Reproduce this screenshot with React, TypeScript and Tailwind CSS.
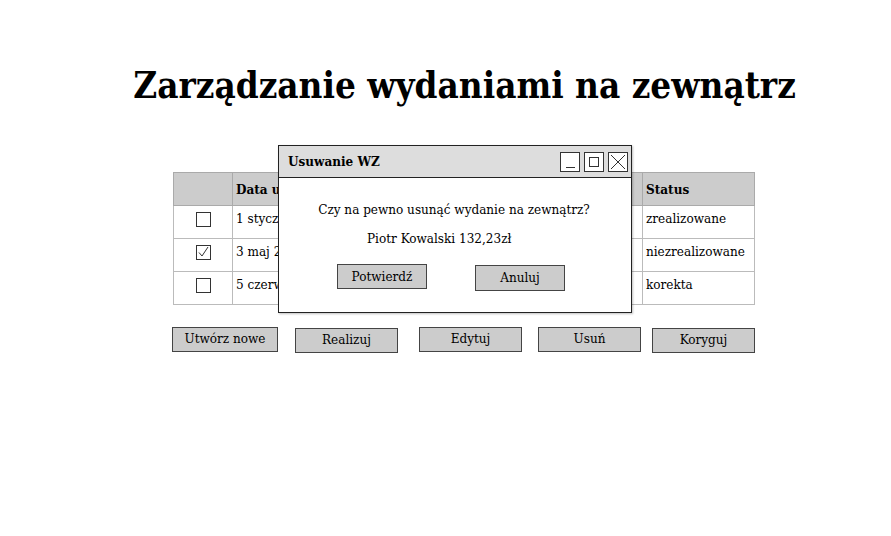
const rows = [
  { checked: false, date: "1 stycznia 2020", status: "zrealizowane" },
  { checked: true, date: "3 maj 2020", status: "niezrealizowane" },
  { checked: false, date: "5 czerwca 2020", status: "korekta" },
];

const actions = [
  { label: "Utwórz nowe", cls: "w-[106px] ml-0 mt-0" },
  { label: "Realizuj", cls: "w-[103px] ml-[17px] mt-px" },
  { label: "Edytuj", cls: "w-[103px] ml-[21px] mt-0" },
  { label: "Usuń", cls: "w-[103px] ml-[16px] mt-0" },
  { label: "Koryguj", cls: "w-[103px] ml-[11px] mt-px" },
];

function Checkbox({ checked }: { checked: boolean }) {
  return (
    <svg width="15" height="15" viewBox="0 0 15 15" className="mx-auto block">
      <rect x="0.5" y="0.5" width="14" height="14" fill="#fff" stroke="#333" />
      {checked && <path d="M3 7.5 L6 11 L12 2" fill="none" stroke="#333" strokeWidth="1" />}
    </svg>
  );
}

export default function App() {
  return (
    <div className="w-[891px] h-[536px] bg-white relative overflow-hidden font-['DejaVu_Serif_Condensed','DejaVu_Serif',serif] text-black">
      <h1 className="pt-[66px] text-center text-[36.5px] font-bold leading-[40px] pl-[38px]">
        Zarządzanie wydaniami na zewnątrz
      </h1>

      <div className="ml-[173px] mt-[66px] w-[582px] text-[13.4px]">
        <table className="w-full border-collapse">
          <thead>
            <tr className="h-[33px] bg-[#cccccc]">
              <th className="w-[59px] border border-[#aaaaaa]" />
              <th className="w-[150px] border border-[#aaaaaa] text-left pl-[3px] font-bold whitespace-nowrap">Data utworzenia</th>
              <th className="w-[140px] border border-[#aaaaaa]" />
              <th className="w-[120px] border border-[#aaaaaa]" />
              <th className="border border-[#aaaaaa] text-left pl-[3px] font-bold">Status</th>
            </tr>
          </thead>
          <tbody>
            {rows.map((r) => (
              <tr key={r.date} className="h-[33px]">
                <td className="border border-[#bbbbbb] pb-[5px]">
                  <Checkbox checked={r.checked} />
                </td>
                <td className="border border-[#bbbbbb] pl-[3px] pb-[5px] whitespace-nowrap">{r.date}</td>
                <td className="border border-[#bbbbbb]" />
                <td className="border border-[#bbbbbb]" />
                <td className="border border-[#bbbbbb] pl-[3px] pb-[5px]">{r.status}</td>
              </tr>
            ))}
          </tbody>
        </table>

        <div className="flex items-start mt-[22px] -ml-px">
          {actions.map((a) => (
            <div
              key={a.label}
              className={`${a.cls} h-[25px] bg-[#cccccc] border border-[#444] flex items-center justify-center`}
            >
              {a.label}
            </div>
          ))}
        </div>
      </div>

      {/* modal dialog */}
      <div className="absolute left-[278px] top-[145px] w-[354px] h-[168px] bg-white border border-[#222] shadow-[1px_1px_2px_rgba(0,0,0,0.25)] text-[13.4px]">
        <div className="h-[32px] bg-[#dddddd] border-b border-[#222] flex items-center pl-[9px] pr-[3px]">
          <span className="font-bold">Usuwanie WZ</span>
          <div className="ml-auto flex gap-[4px]">
            <div className="w-[20px] h-[20px] border border-[#333] bg-white flex items-end justify-center pb-[3px]">
              <div className="w-[9px] h-px bg-[#333]" />
            </div>
            <div className="w-[20px] h-[20px] border border-[#333] bg-white flex items-center justify-center">
              <div className="w-[10px] h-[10px] border border-[#333]" />
            </div>
            <div className="w-[20px] h-[20px] border border-[#333] bg-white flex items-center justify-center">
              <svg width="16" height="16" viewBox="0 0 16 16">
                <path d="M1 1 L15 15 M15 1 L1 15" stroke="#333" strokeWidth="1" />
              </svg>
            </div>
          </div>
        </div>
        <div className="text-center mt-[22px] pr-[2px]">Czy na pewno usunąć wydanie na zewnątrz?</div>
        <div className="mt-[9px] ml-[88px]">Piotr Kowalski 132,23zł</div>
        <div className="flex items-start mt-[15px] ml-[58px] gap-[48px]">
          <div className="w-[90px] h-[25px] bg-[#cccccc] border border-[#444] flex items-center justify-center">
            Potwierdź
          </div>
          <div className="w-[90px] h-[26px] mt-px bg-[#cccccc] border border-[#444] flex items-center justify-center">
            Anuluj
          </div>
        </div>
      </div>
    </div>
  );
}
